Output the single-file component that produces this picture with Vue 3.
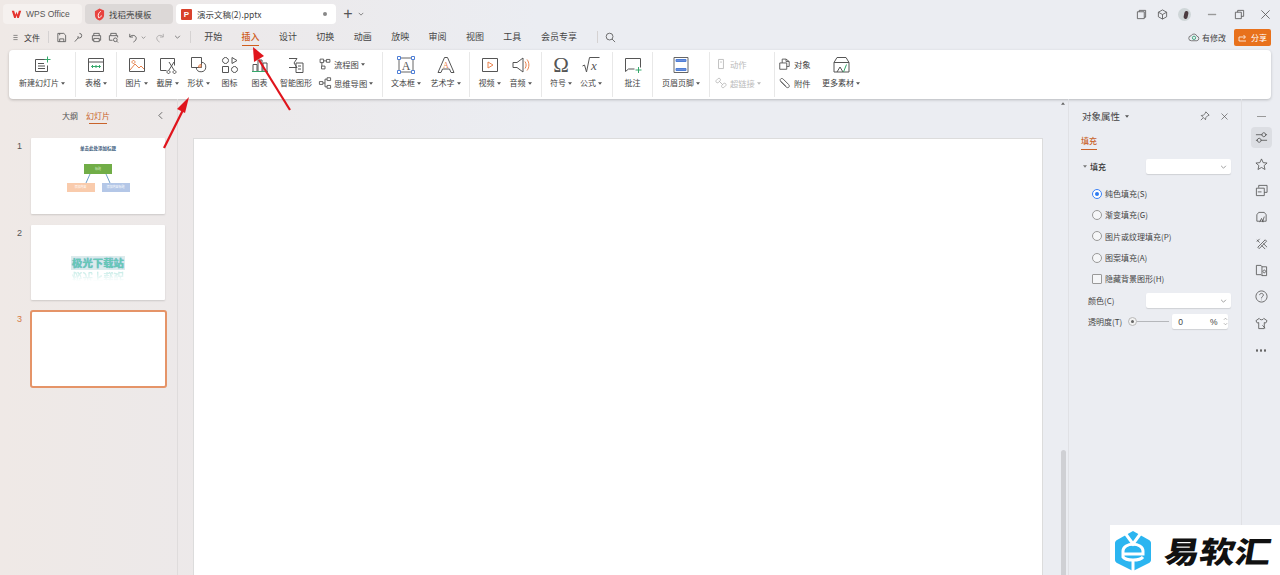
<template>
  <div class="app">
    <!-- tab strip -->
    <header class="tabbar">
      <div class="tab tab--home">
        <svg class="tab-logo" viewBox="0 0 14 12"><path d="M1 2h3l1.500 5L7 3l1.500 4L10 2h3l-3 9H8L7 7.500 6 11H4z" fill="#e5322d" /></svg>
        <span>WPS Office</span>
      </div>
      <div class="tab tab--tpl">
        <svg class="tab-logo tab-logo--tpl" viewBox="0 0 12 14"><path d="M6 .5l5 2v5C11 10.500 8.500 13 6 13.500 3 13 1 10.500 1 7.500v-4z" fill="#e8433f" /><path d="M7.500 3.500C5 5 4 7 5 10.500M5 10.500c1.500 0 3-1 3-2.500" stroke="#fff" fill="none" /></svg>
        <span>找稻壳模板</span>
      </div>
      <div class="tab tab--doc">
        <span class="ppt-badge">P</span>
        <span class="doc-name">演示文稿(2).pptx</span>
        <i class="doc-dot" />
      </div>
      <button class="tab-add" type="button">+</button>
      <svg class="chev chev--add" viewBox="0 0 8 5"><path d="M1 1l3 3 3-3" /></svg>

      <div class="win-actions">
        <svg class="win-ico" viewBox="0 0 12 12"><path d="M1.500 3h7.500v7.500H1.500zM3.500 3V1.500h7v7.500H9" /></svg>
        <svg class="win-ico win-ico--cube" viewBox="0 0 12 12"><path d="M6 1l4.500 2.500v5L6 11 1.500 8.500v-5zM1.500 3.500L6 6l4.500-2.500M6 6v5" /></svg>
        <span class="avatar"><i /></span>
        <svg class="win-ico win-ico--min" viewBox="0 0 12 12"><path d="M1 6h9" stroke-width="1.500" /></svg>
        <svg class="win-ico win-ico--max" viewBox="0 0 12 12"><path d="M1.500 3.500h6.500V10.500H1.500zM4 3.500V1.500h6.500V8H8" /></svg>
        <svg class="win-ico win-ico--close" viewBox="0 0 12 12"><path d="M1.500 1.500l9 9M10.500 1.500l-9 9" /></svg>
      </div>
    </header>

    <!-- menu row -->
    <nav class="menubar">
      <svg class="qa qa--menu" viewBox="0 0 10 10"><path d="M2 2h6M2 5h6M2 8h6" /></svg>
      <span class="file-label">文件</span>
      <i class="menu-sep" />
      <svg class="qa" viewBox="0 0 12 12"><path d="M2 1.500h6.500L10.500 3.500v7H2zM4 10.500V7.500h4.500v3M4 1.500v2" /></svg>
      <svg class="qa" viewBox="0 0 12 12"><path d="M7 1.500a2.500 2.500 0 0 1 0 5H5.500V4.500M5.500 6.500L2 10.500" /></svg>
      <svg class="qa" viewBox="0 0 12 12"><path d="M3 4V1.500h6V4M1.500 4h9v5H9M3 9H1.500V4M3 7h6v3.500H3z" /></svg>
      <svg class="qa" viewBox="0 0 12 12"><path d="M3 4V1.500h6V4M1.500 9V4h9v2M5 9H1.500" /><circle cx="8" cy="8.500" r="2" /><path d="M9.500 10l1.500 1.500" /></svg>
      <svg class="qa qa--undo" viewBox="0 0 12 12"><path d="M3 2v3.500h3.500M3 5.500C4.500 3 9 3 10 6c.5 2-1 4-3 5" /></svg>
      <svg class="chev chev--qa" viewBox="0 0 8 5"><path d="M1 1l3 3 3-3" /></svg>
      <svg class="qa qa--redo" viewBox="0 0 12 12"><path d="M9 2v3.500H5.500M9 5.500C7.500 3 3 3 2 6c-.5 2 1 4 3 5" /></svg>
      <svg class="chev chev--more" viewBox="0 0 8 5"><path d="M1 1l3 3 3-3" /></svg>
      <i class="menu-sep menu-sep--b" />
      <div class="menu-tabs">
        <span
          v-for="m in menus"
          :key="m"
          class="menu-tab"
          :class="{ 'menu-tab--on': m === '插入' }"
        >{{ m }}</span>
      </div>
      <i class="menu-sep menu-sep--c" />
      <svg class="qa qa--search" viewBox="0 0 12 12"><circle cx="5" cy="5" r="3.700" /><path d="M7.700 7.700L11 11" /></svg>

      <div class="menu-right">
        <svg class="cloud" viewBox="0 0 14 12"><path d="M4 10.500a3 3 0 0 1-.5-6 3.800 3.800 0 0 1 7 .5 2.800 2.800 0 0 1 0 5.500z" fill="none" stroke="#666" /><circle cx="7" cy="7" r="2" fill="none" stroke="#2a9d6f" /></svg>
        <span class="saved">有修改</span>
        <button class="share" type="button">
          <svg viewBox="0 0 10 9"><path d="M1 8V4h6M5.500 2L7.500 4 5.500 6M1 8h7" fill="none" stroke="#fff" stroke-width=".8" /></svg>
          分享
        </button>
      </div>
    </nav>

    <!-- ribbon -->
    <section class="ribbon">
      <div
        v-for="(g, i) in groups"
        :key="i"
        class="rb-group"
        :style="{ width: g.w + 'px', paddingLeft: g.pad + 'px' }"
      >
        <template v-for="it in g.items" :key="it.label || it.col[0].label">
          <div v-if="it.col" class="rb-col" :style="{ width: it.w + 'px' }">
            <div v-for="c in it.col" :key="c.label" class="rb-line" :class="{ 'rb--dim': c.dim }">
              <svg class="rb-ico-sm" viewBox="0 0 20 20">
                <template v-for="(p, n) in icons[c.icon]" :key="n">
                  <text v-if="p.t" :x="p.x" :y="p.y" :font-size="p.s" :fill="p.c || '#555'" text-anchor="middle">{{ p.t }}</text>
                  <path v-else :d="p.d" :stroke="p.c || '#555'" :fill="p.f || 'none'" />
                </template>
              </svg>
              <span>{{ c.label }}</span>
              <svg v-if="c.caret" class="caret" viewBox="0 0 6 4"><path d="M0 0h6L3 4z" /></svg>
            </div>
          </div>
          <div v-else class="rb-item" :style="{ width: it.w + 'px' }">
            <svg class="rb-ico" viewBox="0 0 20 20">
              <template v-for="(p, n) in icons[it.icon]" :key="n">
                <text v-if="p.t" :x="p.x" :y="p.y" :font-size="p.s" :font-style="p.i" :fill="p.c || '#555'" text-anchor="middle">{{ p.t }}</text>
                <path v-else :d="p.d" :stroke="p.c || '#555'" :fill="p.f || 'none'" />
              </template>
            </svg>
            <span class="rb-label">
              {{ it.label }}
              <svg v-if="it.caret" class="caret" viewBox="0 0 6 4"><path d="M0 0h6L3 4z" /></svg>
            </span>
          </div>
        </template>
      </div>
    </section>

    <main class="workspace">
      <!-- slide list -->
      <aside class="slides">
        <div class="slides-head">
          <span>大纲</span>
          <span class="slides-tab">幻灯片</span>
          <svg class="slides-fold" viewBox="0 0 6 10"><path d="M5 1L1 5l4 4" /></svg>
        </div>
        <div class="thumb-row">
          <span class="thumb-no">1</span>
          <div class="thumb thumb--one">
            <div class="t1-title">单击此处添加标题</div>
            <div class="t1-green">标题</div>
            <svg class="t1-lines" viewBox="0 0 30 9"><path d="M7 0L3 9M23 0L27 9" stroke="#6f9ec8" fill="none" /></svg>
            <div class="t1-boxes">
              <span class="t1-peach">添加内容</span>
              <span class="t1-blue">添加内容标题</span>
            </div>
          </div>
        </div>
        <div class="thumb-row">
          <span class="thumb-no">2</span>
          <div class="thumb thumb--two">
            <div class="t2-text">极光下载站</div>
            <div class="t2-mirror">极光下载站</div>
          </div>
        </div>
        <div class="thumb-row thumb-row--on">
          <span class="thumb-no">3</span>
          <div class="thumb thumb--on" />
        </div>
      </aside>

      <!-- canvas -->
      <section class="canvas">
        <div class="slide" />
        <div class="vscroll">
          <svg class="vscroll-up" viewBox="0 0 6 4"><path d="M0 4h6L3 0z" /></svg>
          <i class="vscroll-thumb" />
        </div>
      </section>

      <!-- object properties -->
      <aside class="props">
        <div class="props-head">
          <span>对象属性</span>
          <svg class="caret caret--head" viewBox="0 0 6 4"><path d="M0 0h6L3 4z" /></svg>
          <svg class="props-pin" viewBox="0 0 12 12"><path d="M7 1l4 4-2 .8-2 2.200-.4 2.500L1.500 5.400 4 5l2.200-2zM3.500 8.500L1 11" /></svg>
          <svg class="props-x" viewBox="0 0 12 12"><path d="M2 2l8 8M10 2l-8 8" /></svg>
        </div>
        <div class="props-tab"><span>填充</span></div>
        <div class="form-row form-row--fill">
          <svg class="tri" viewBox="0 0 6 4"><path d="M0 0h6L3 4z" /></svg>
          <b>填充</b>
          <div class="select"><svg viewBox="0 0 8 5"><path d="M1 1l3 3 3-3" /></svg></div>
        </div>
        <ul class="options">
          <li v-for="(o, i) in fills" :key="o">
            <i class="radio" :class="{ 'radio--on': i === 0 }" />{{ o }}
          </li>
          <li><i class="check" />隐藏背景图形(H)</li>
        </ul>
        <div class="form-row form-row--color">
          <span>颜色(C)</span>
          <div class="select"><svg viewBox="0 0 8 5"><path d="M1 1l3 3 3-3" /></svg></div>
        </div>
        <div class="form-row form-row--alpha">
          <span>透明度(T)</span>
          <div class="slider"><i /></div>
          <div class="num">
            <span>0</span><em>%</em>
            <svg viewBox="0 0 6 12"><path d="M1 4l2-2 2 2M1 8l2 2 2-2" /></svg>
          </div>
        </div>
      </aside>

      <!-- right rail -->
      <aside class="rail">
        <i class="rail-min" />
        <span
          v-for="(r, i) in rail"
          :key="i"
          class="rail-btn"
          :class="{ 'rail-btn--on': i === 0 }"
        >
          <svg viewBox="0 0 14 14"><path :d="r" /></svg>
        </span>
        <span class="rail-more"><i /><i /><i /></span>
      </aside>
    </main>

    <!-- red annotation arrows on top of the screenshot -->
    <svg class="arrows" viewBox="0 0 1280 575">
      <path d="M164 148L183 110" stroke="#e0141c" stroke-width="2.200" fill="none" />
      <path d="M189 97L177 109 185 113z" fill="#e0141c" />
      <path d="M290 110L259 60" stroke="#e0141c" stroke-width="2.200" fill="none" />
      <path d="M253 47L254 62 264 56z" fill="#e0141c" />
    </svg>

    <!-- site watermark -->
    <div class="mark">
      <svg viewBox="0 0 38 42"><path d="M19 1l16 9c1 .6 2 1.500 2 3v17c0 1.500-1 2.400-2 3l-16 8-16-8c-1-.6-2-1.500-2-3V13c0-1.500 1-2.400 2-3z" fill="#2bb5f0" /><path d="M11 3l8 11 8-11" fill="none" stroke="#fff" stroke-width="3" /><path d="M9 21c0-9 20-9 20 0v3H9zM9 24v3c3 4 17 4 20 0M19 30v12" fill="none" stroke="#fff" stroke-width="3" /></svg>
      <span>易软汇</span>
    </div>
  </div>
</template>

<script setup>
const menus = ['开始', '插入', '设计', '切换', '动画', '放映', '审阅', '视图', '工具', '会员专享']

const fills = ['纯色填充(S)', '渐变填充(G)', '图片或纹理填充(P)', '图案填充(A)']

const OR = '#e8834e'
const GR = '#35a86b'
const BL = '#4f7fd6'

const icons = {
  newSlide: [{ d: 'M3.500 4.500h10M3.500 4.500v12h12v-6M6 8.500h6M6 11h7M6 13.500h7', f: 'none' }, { d: 'M15.500 1.500v6M12.500 4.500h6', c: GR }],
  table: [{ d: 'M2.500 3.500h15v13h-15zM2.500 7h15' }, { d: 'M5.500 11.500h9M7 10l-1.500 1.500L7 13M13 10l1.500 1.500L13 13M10 10v3', c: GR }],
  picture: [{ d: 'M2.500 3.500h15v13h-15z' }, { d: 'M3 15l5-6 4 4 2-2 3 3', c: OR }, { d: 'M6.500 5.500a1.500 1.500 0 1 1-.01 0z', c: OR }],
  shot: [{ d: 'M2.500 15.500v-12h14v7M2.500 15.500h6' }, { d: 'M11 7l5 8M16 7l-5 8', c: '#555' }, { d: 'M10.500 15.500a1.500 1.500 0 1 0 .01 0zM16.500 15.500a1.500 1.500 0 1 0 .01 0z' }],
  shape: [{ d: 'M2.500 2.500h10v10h-10z' }, { d: 'M12.500 7.200a4.800 4.800 0 1 1-5.300 5.300' }, { d: 'M12 9.500v2.500H9.500a2.500 2.500 0 0 1 2.500-2.500z', c: OR }],
  gallery: [{ d: 'M5.500 2.500a3 3 0 1 1-.01 0zM12 2.500l5 3-5 3zM2.500 11.500h6v6h-6zM14.500 11.500a3 3 0 1 1-.01 0z' }],
  chart: [{ d: 'M3 16V9.500h4V16M8 16V5h4v11M13 16V8h4v8' }, { d: 'M2 16.500h16', c: GR }],
  smart: [{ d: 'M3 3.500h8L8 8l3 4.500H3' }, { d: 'M10 8h7v9.500H10zM12 11h3M12 14h3' }],
  flow: [{ d: 'M3 3h5v5H3zM12 3.500h5v4h-5zM5 13h5v4H5z', f: 'none' }, { d: 'M8 5.500h4M5.500 8v5', c: '#555' }],
  mind: [{ d: 'M2 8h5v4H2zM13 2.500h5v4h-5zM13 13.500h5v4h-5zM7 10h3M10 4.500v11M10 4.500h3M10 15.500h3' }],
  textbox: [{ d: 'M3 3h14v14H3z', c: '#666' }, { d: 'M1.500 1.500h3v3h-3zM15.500 1.500h3v3h-3zM1.500 15.500h3v3h-3zM15.500 15.500h3v3h-3z', c: BL, f: '#fff' }, { t: 'A', x: 10, y: 14.500, s: 12, c: '#555' }],
  art: [{ d: 'M2 17.500L8.500 2.500h3L18 17.500h-3L13.500 14h-7L5 17.500z' }, { t: 'A', x: 10, y: 12.500, s: 8, c: OR }],
  video: [{ d: 'M2.500 3.500h15v13h-15z' }, { d: 'M8 7l5 3-5 3z', c: OR }],
  audio: [{ d: 'M2 7.500h4L12 3v14l-6-4.500H2z' }, { d: 'M14 6.500c1.500 2 1.500 5 0 7M16 4.500c2.500 3 2.500 8 0 11', c: OR }],
  omega: [{ t: 'Ω', x: 10, y: 17, s: 21 }],
  formula: [{ d: 'M1.500 11l2-1 2 7 3-14.500h10' }, { t: 'x', x: 13, y: 15, s: 13, i: 'italic' }],
  note: [{ d: 'M2.500 3.500h15v9M2.500 3.500v13l3-2.500h6' }, { d: 'M15.500 12v6M12.500 15h6', c: GR }],
  header: [{ d: 'M3 2.500h14v15H3z', c: '#666' }, { d: 'M5 4.500h10v2H5zM5 13.500h10v2H5z', c: BL, f: '#6d8fdc' }],
  mouse: [{ d: 'M6.500 3.500h7v13h-7zM10 6v2.500', c: '#bbb' }],
  link: [{ d: 'M3 6.500l3-3c2-1 4 1 3 3l-3 3c-2 1-4-1-3-3zM11 13.500l3-3c2-1 4 1 3 3l-3 3c-2 1-4-1-3-3zM7 7l6 6', c: '#bbb' }],
  object: [{ d: 'M2.500 8.500h10v9h-10zM6 8.500V3h5.500L16 6.500v7h-3.500M11.500 3v3.500H16' }],
  clip: [{ d: 'M3.500 7.500l8 8c3 3 6.500-.5 3.500-3.500L7.500 4.500C5 2 1.500 5 4 7.500l7 7' }],
  material: [{ d: 'M3 7.500l3-5h9l3 5v9.500H3zM3 7.500h15M6 17l3-5 3 5' }, { d: 'M15.500 9.500l-3 7.500', c: GR }],
}

const groups = [
  { w: 67, pad: 0, items: [{ label: '新建幻灯片', icon: 'newSlide', w: 66, caret: true }] },
  { w: 41, pad: 0, items: [{ label: '表格', icon: 'table', w: 40, caret: true }] },
  {
    w: 266,
    pad: 4,
    items: [
      { label: '图片', icon: 'picture', w: 31, caret: true },
      { label: '截屏', icon: 'shot', w: 31, caret: true },
      { label: '形状', icon: 'shape', w: 31, caret: true },
      { label: '图标', icon: 'gallery', w: 31 },
      { label: '图表', icon: 'chart', w: 29 },
      { label: '智能图形', icon: 'smart', w: 44 },
      { w: 60, col: [{ label: '流程图', icon: 'flow', caret: true }, { label: '思维导图', icon: 'mind', caret: true }] },
    ],
  },
  {
    w: 87,
    pad: 3,
    items: [
      { label: '文本框', icon: 'textbox', w: 40, caret: true },
      { label: '艺术字', icon: 'art', w: 39, caret: true },
    ],
  },
  {
    w: 72,
    pad: 4,
    items: [
      { label: '视频', icon: 'video', w: 31, caret: true },
      { label: '音频', icon: 'audio', w: 31, caret: true },
    ],
  },
  {
    w: 71,
    pad: 4,
    items: [
      { label: '符号', icon: 'omega', w: 30, caret: true },
      { label: '公式', icon: 'formula', w: 30, caret: true },
    ],
  },
  { w: 40, pad: 0, items: [{ label: '批注', icon: 'note', w: 39 }] },
  { w: 57, pad: 0, items: [{ label: '页眉页脚', icon: 'header', w: 56, caret: true }] },
  {
    w: 65,
    pad: 4,
    items: [{ w: 58, col: [{ label: '动作', icon: 'mouse', dim: true }, { label: '超链接', icon: 'link', dim: true, caret: true }] }],
  },
  {
    w: 100,
    pad: 3,
    items: [
      { w: 41, col: [{ label: '对象', icon: 'object' }, { label: '附件', icon: 'clip' }] },
      { label: '更多素材', icon: 'material', w: 44, caret: true },
    ],
  },
]

const rail = [
  'M1 4h7M11 4h2M1 10h2M6 10h7M8 2.500a1.500 1.500 0 1 1 3 3 1.500 1.500 0 1 1-3-3zM3 8.500a1.500 1.500 0 1 1 3 3 1.500 1.500 0 1 1-3-3z',
  'M7 1l1.800 4 4.200.4-3.200 2.800 1 4.200L7 10.200 3.200 12.400l1-4.200L1 5.400 5.200 5z',
  'M4 4V1.500h9V9H10M1.500 4.500H10V12.500H1.500zM3 8.500h4',
  'M2 11V4l2-2.500h6L12 4v7zM5 12l2-4 2 4M10 6l-2 6',
  'M2 3l3 3M5 2L2 5M7 9l4 4M9 7l4 4M3 11L11 3l1.500 1.500L4.500 12.500z',
  'M1.500 1.500h5l1 1.500v9.500l-1-1h-5zM7.500 3h5v9.500h-5M10 6.500a1.500 1.500 0 1 0 .01 0z',
  'M7 1a6 6 0 1 1-.01 0zM5 5.500C5 3 9 3 9 5.500 9 7 7 7 7 9M7 10.500v.5',
  'M4.500 1.500L1 4l1.500 2.500L4 6v6.500h6V6l1.500.5L13 4 9.500 1.500C9 3.500 5 3.500 4.500 1.500zM8 9l3 3',
]
</script>

<style>
html, body { margin: 0; padding: 0; background: #ebedf2; }
</style>

<style scoped>
.app {
  position: relative;
  width: 1280px;
  height: 575px;
  overflow: hidden;
  font-family: "Noto Sans CJK SC", "Noto Sans", sans-serif;
  font-size: 8px;
  color: #444;
  background: linear-gradient(90deg, #efe9e6 0, #ece9ea 18%, #ebedf2 42%);
}
svg { display: block; flex: none; }

/* tab strip */
.tabbar { display: flex; align-items: center; height: 20px; padding: 4px 0 2px 3px; }
.tab { display: flex; align-items: center; height: 20px; border-radius: 4px; box-sizing: border-box; font-size: 8.500px; }
.tab--home { width: 79px; padding-left: 8px; background: #f5f1ef; font-family: "Liberation Sans", sans-serif; color: #555; }
.tab--tpl { width: 88px; margin-left: 3px; padding-left: 9px; background: #dcd8d7; }
.tab--doc { width: 160px; margin-left: 3px; padding-left: 5px; background: #fff; }
.tab-logo { width: 11px; height: 10px; margin-right: 4px; }
.tab-logo--tpl { width: 11px; height: 13px; margin-right: 4px; }
.ppt-badge {
  width: 11px; height: 11px; margin-right: 5px;
  background: #d9412b; color: #fff; border-radius: 1px;
  font: bold 8px/11px "Liberation Sans", sans-serif; text-align: center;
}
.doc-name { flex: 1; }
.doc-dot { width: 4px; height: 4px; margin-right: 9px; border-radius: 50%; background: #888; }
.tab-add {
  width: 14px; height: 20px; margin-left: 5px; padding: 0; border: 0; background: none;
  font: 16px/20px "Liberation Sans", sans-serif; color: #555;
}
.chev { fill: none; stroke: #666; stroke-width: 1; }
.chev--add { width: 6px; height: 4px; margin-left: 3px; }
.win-actions { display: flex; align-items: center; margin-left: auto; }
.win-ico { width: 11px; height: 11px; fill: none; stroke: #555; stroke-width: .9; }
.win-actions > .win-ico:first-child { margin-right: 10px; }
.win-ico--cube { margin-right: 10px; }
.avatar { display: block; width: 13px; height: 13px; border-radius: 50%; background: #cfd6d8; overflow: hidden; position: relative; margin-right: 16px; }
.avatar i { position: absolute; left: 6px; top: 3px; width: 4px; height: 8px; background: #4a3b3f; border-radius: 2px; transform: rotate(12deg); }
.win-ico--min { margin-right: 16px; stroke: #999; }
.win-ico--max { margin-right: 15px; }
.win-ico--close { margin-right: 9px; }

/* menu row */
.menubar { display: flex; align-items: center; height: 20px; padding-top: 1px; }
.qa { width: 11px; height: 11px; margin-left: 6.500px; fill: none; stroke: #555; stroke-width: .9; }
.qa--menu { width: 7px; height: 9px; margin-left: 12px; }
.file-label { margin-left: 5px; font-size: 8px; color: #333; }
.menu-sep { width: 1px; height: 12px; margin: 0 0 0 8px; background: #d5d2d2; }
.menu-sep--b { margin: 0 0 0 9px; }
.menu-sep--c { margin: 0 0 0 6px; }
.qa--undo { margin-left: 7.500px; }
.chev--qa { width: 5px; height: 3px; margin-left: 3px; }
.qa--redo { margin-left: 9px; opacity: .45; }
.chev--more { width: 7px; height: 4px; margin-left: 8px; }
.menu-tabs { display: flex; margin-left: 4px; margin-right: 4px; }
.menu-tab { position: relative; width: 37.400px; text-align: center; font-size: 9px; line-height: 20px; color: #444; }
.menu-tab:last-child { width: 56px; }
.menu-tab--on { color: #cf5d1c; font-weight: 500; }
.menu-tab--on::after { content: ""; position: absolute; left: 10px; right: 10px; bottom: 1px; height: 1.500px; background: #cf5d1c; }
.qa--search { margin-left: 7px; }
.menu-right { display: flex; align-items: center; margin-left: auto; margin-right: 9px; }
.cloud { width: 12px; height: 10px; margin-right: 2px; }
.saved { font-size: 8px; width: 25px; }
.share {
  display: flex; align-items: center; gap: 3px;
  width: 37px; height: 17px; margin-left: 7px; padding: 0 0 0 4px; box-sizing: border-box;
  border: 0; border-radius: 2px; background: #e8711c; color: #fff;
  font: 8px "Noto Sans CJK SC", sans-serif;
}
.share svg { width: 10px; height: 9px; }

/* ribbon */
.ribbon {
  display: flex;
  height: 49px;
  margin: 3px 9px 0;
  background: #fff;
  border-radius: 4px;
  box-shadow: 0 1px 3px rgba(0, 0, 0, .22);
}
.rb-group {
  position: relative;
  display: flex;
  box-sizing: border-box;
  flex: none;
}
.rb-group:not(:last-child)::after {
  content: ""; position: absolute; right: 0; top: 2px; bottom: 2px; width: 1px; background: #e8e8e8;
}
.rb-item { display: flex; flex-direction: column; align-items: center; flex: none; padding-top: 5px; box-sizing: border-box; }
.rb-ico { width: 20px; height: 20px; stroke-width: 1; overflow: visible; }
.rb-ico text { font-family: "Liberation Serif", serif; }
.rb-label { display: flex; align-items: center; gap: 2px; margin-top: 2px; line-height: 12px; white-space: nowrap; }
.rb-col { display: flex; flex-direction: column; flex: none; padding-top: 7.500px; gap: 6px; font-size: 8.300px; }
.rb-line { display: flex; align-items: center; gap: 2px; height: 13px; white-space: nowrap; }
.rb-ico-sm { width: 14px; height: 14px; stroke-width: 1.300; }
.rb--dim { color: #bbb; }
.rb--dim .caret { fill: #bbb; }
.caret { width: 4px; height: 3px; fill: #555; }

/* workspace */
.workspace { display: flex; height: 476px; }
.slides { width: 177px; flex: none; border-right: 1px solid #dfdcdc; box-sizing: content-box; }
.slides-head { display: flex; align-items: flex-start; height: 39px; padding: 10px 0 0 62px; box-sizing: border-box; font-size: 8px; line-height: 13px; gap: 8px; color: #555; }
.slides-tab { position: relative; color: #c9632a; }
.slides-tab::after { content: ""; position: absolute; left: 3px; right: 3px; top: 14px; height: 1px; background: #c9632a; }
.slides-fold { width: 5px; height: 9px; margin: 2px 0 0 40px; fill: none; stroke: #555; }
.thumb-row { display: flex; margin-bottom: 11px; }
.thumb-row--on { margin-left: 0; margin-top: -1px; }
.thumb-no { width: 31px; padding: 2px 0 0 17px; box-sizing: border-box; font: 9px/12px "Liberation Sans", sans-serif; color: #555; }
.thumb { width: 134px; height: 76px; background: #fff; box-shadow: 0 1px 2px rgba(0, 0, 0, .14); border-radius: 1px; }
.thumb-row:nth-child(3) .thumb { height: 75px; }
.thumb-row--on .thumb-no { width: 30px; color: #d57a45; padding-top: 3px; }
.thumb--on { width: 137px; height: 78px; box-sizing: border-box; border: 2px solid #e59468; border-radius: 3px; box-shadow: none; }
.thumb--one { display: flex; flex-direction: column; align-items: center; }
.t1-title { margin-top: 7px; font-size: 4.500px; line-height: 6px; font-weight: 700; color: #3c5a7a; }
.t1-green { width: 28px; height: 10px; margin-top: 13px; background: #71ad47; color: #dff0d0; font-size: 3px; line-height: 10px; text-align: center; }
.t1-lines { width: 30px; height: 9px; }
.t1-boxes { display: flex; gap: 7px; }
.t1-boxes span { width: 28px; height: 9px; font-size: 3px; line-height: 9px; text-align: center; color: #fff; }
.t1-peach { background: #f9cbac; }
.t1-blue { background: #b4c7e7; }
.thumb--two { display: flex; flex-direction: column; align-items: center; padding-top: 31px; box-sizing: border-box; }
.t2-text {
  width: 54px; height: 14px; text-align: center;
  background: #dcebec; color: #66c9b4;
  font-size: 10.400px; line-height: 14px; font-weight: 700;
  white-space: nowrap;
  text-shadow: 0 0 1px #5d9fd0;
}
.t2-mirror {
  width: 54px; height: 14px;
  text-align: center; white-space: nowrap;
  color: #8fd8cf; font-size: 10.400px; line-height: 14px; font-weight: 700;
  transform: scaleY(-1);
  opacity: .6;
  -webkit-mask-image: linear-gradient(0deg, #000, transparent 80%);
  mask-image: linear-gradient(0deg, #000, transparent 80%);
}

.canvas { display: flex; flex: none; width: 891px; box-sizing: border-box; padding: 40px 0 0 16px; border-right: 1px solid #e0e1e5; }
.slide { width: 848px; height: 436px; background: #fff; box-shadow: 0 0 0 1px #dcdcdc; flex: none; }
.vscroll { position: relative; flex: 1; }
.vscroll-up { position: absolute; left: 19px; top: -37px; width: 4px; height: 3px; fill: #666; }
.vscroll-thumb { position: absolute; left: 19px; top: 311px; width: 5px; height: 130px; border-radius: 3px; background: #cfd0d4; }

/* properties */
.props { width: 173px; flex: none; padding-left: 12px; box-sizing: border-box; border-right: 1px solid #e0e1e5; font-size: 8px; }
.props-head { display: flex; align-items: center; height: 20px; margin-top: 7px; margin-left: 1px; font-size: 9.500px; color: #444; }
.caret--head { margin-left: 5px; }
.props-pin { width: 10px; height: 10px; margin-left: 71px; fill: none; stroke: #555; stroke-width: .9; }
.props-x { width: 9px; height: 9px; margin-left: 10px; fill: none; stroke: #555; stroke-width: .9; }
.props-tab { height: 16px; margin-top: 8px; }
.props-tab span { display: inline-block; height: 15px; line-height: 14px; font-size: 8px; font-weight: 500; color: #c9632a; border-bottom: 1px solid #c9632a; }
.form-row { display: flex; align-items: center; height: 15px; }
.form-row--fill { margin-top: 9px; margin-left: 2px; }
.form-row--fill b { margin-left: 3px; font-weight: 500; color: #333; }
.tri { width: 4px; height: 3px; fill: #777; }
.select {
  display: flex; align-items: center; justify-content: flex-end;
  width: 85px; height: 15px; margin-left: auto; margin-right: 10px; padding-right: 4px; box-sizing: border-box;
  background: #fff; border-radius: 2px; box-shadow: 0 1px 1px rgba(0, 0, 0, .12);
}
.select svg { width: 7px; height: 4px; fill: none; stroke: #888; }
.options { margin: 9px 0 0 11px; padding: 0; list-style: none; }
.options li { display: flex; align-items: center; height: 21.300px; gap: 3px; }
.radio { width: 8px; height: 8px; border-radius: 50%; border: 1px solid #999; background: #f5f6f8; position: relative; }
.radio--on { border-color: #3b82f6; background: #fff; }
.radio--on::after { content: ""; position: absolute; inset: 2px; border-radius: 50%; background: #2f7bf0; }
.check { width: 8px; height: 8px; border: 1px solid #999; border-radius: 1px; background: #f5f6f8; }
.form-row--color { margin-top: 4px; padding-left: 7px; }
.form-row--alpha { margin-top: 6px; padding-left: 7px; }
.slider { position: relative; width: 41px; height: 1px; margin-left: 6px; background: #b5b7bb; }
.slider i { position: absolute; left: 0; top: -4px; width: 7px; height: 7px; border-radius: 50%; border: 1px solid #b9b9b9; background: #f2f2f2; }
.slider i::after { content: ""; position: absolute; inset: 2px; border-radius: 50%; background: #666; }
.num { display: flex; align-items: center; width: 56px; height: 15px; margin-left: 3px; padding-left: 6px; box-sizing: border-box; background: #fff; border-radius: 2px; box-shadow: 0 1px 1px rgba(0, 0, 0, .12); font: 8.500px "Liberation Sans", sans-serif; }
.num em { margin-left: 27px; font-style: normal; }
.num svg { width: 5px; height: 11px; margin-left: 5px; fill: none; stroke: #888; stroke-width: .7; }

/* rail */
.rail { display: flex; flex-direction: column; align-items: center; flex: 1; }
.rail-min { width: 9px; height: 1px; margin-top: 17px; margin-bottom: 10px; background: #999; }
.rail-btn { display: flex; align-items: center; justify-content: center; width: 21px; height: 21px; margin-bottom: 5.500px; border-radius: 4px; }
.rail-btn--on { background: #dcdee3; }
.rail-btn svg { width: 13px; height: 13px; fill: none; stroke: #555; stroke-width: .9; }
.rail-more { display: flex; gap: 1.500px; margin-top: 10px; }
.rail-more i { width: 2.500px; height: 2.500px; border: .5px solid #666; border-radius: 50%; box-sizing: border-box; background: #888; }

/* overlays */
.arrows { position: absolute; left: 0; top: 0; width: 1280px; height: 575px; pointer-events: none; }
.mark {
  position: absolute; right: 0; bottom: 0;
  display: flex; align-items: center;
  width: 170px; height: 50px; box-sizing: border-box; padding-left: 4px;
  background: #fff;
}
.mark svg { width: 38px; height: 42px; margin-top: 1px; }
.mark span {
  margin-left: 13px; width: 107px;
  font-size: 30px; line-height: 50px; font-weight: 900;
  color: #111; white-space: nowrap;
  transform: scaleX(1.180) skewX(-8deg);
  transform-origin: left center;
}
</style>
